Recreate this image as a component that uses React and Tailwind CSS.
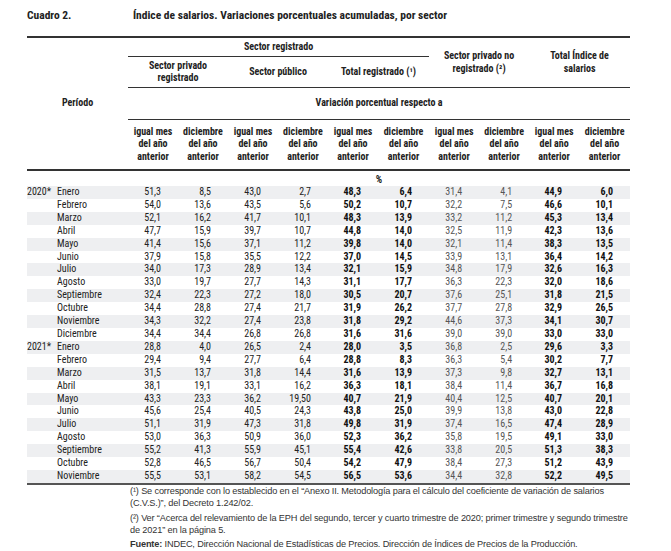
const rows2020 = [
  ["Enero", "51,3", "8,5", "43,0", "2,7", "48,3", "6,4", "31,4", "4,1", "44,9", "6,0"],
  ["Febrero", "54,0", "13,6", "43,5", "5,6", "50,2", "10,7", "32,2", "7,5", "46,6", "10,1"],
  ["Marzo", "52,1", "16,2", "41,7", "10,1", "48,3", "13,9", "33,2", "11,2", "45,3", "13,4"],
  ["Abril", "47,7", "15,9", "39,7", "10,7", "44,8", "14,0", "32,5", "11,9", "42,3", "13,6"],
  ["Mayo", "41,4", "15,6", "37,1", "11,2", "39,8", "14,0", "32,1", "11,4", "38,3", "13,5"],
  ["Junio", "37,9", "15,8", "35,5", "12,2", "37,0", "14,5", "33,9", "13,1", "36,4", "14,2"],
  ["Julio", "34,0", "17,3", "28,9", "13,4", "32,1", "15,9", "34,8", "17,9", "32,6", "16,3"],
  ["Agosto", "33,0", "19,7", "27,7", "14,3", "31,1", "17,7", "36,3", "22,3", "32,0", "18,6"],
  ["Septiembre", "32,4", "22,3", "27,2", "18,0", "30,5", "20,7", "37,6", "25,1", "31,8", "21,5"],
  ["Octubre", "34,4", "28,8", "27,4", "21,7", "31,9", "26,2", "37,7", "27,8", "32,9", "26,5"],
  ["Noviembre", "34,3", "32,2", "27,4", "23,8", "31,8", "29,2", "44,6", "37,3", "34,1", "30,7"],
  ["Diciembre", "34,4", "34,4", "26,8", "26,8", "31,6", "31,6", "39,0", "39,0", "33,0", "33,0"],
];

const rows2021 = [
  ["Enero", "28,8", "4,0", "26,5", "2,4", "28,0", "3,5", "36,8", "2,5", "29,6", "3,3"],
  ["Febrero", "29,4", "9,4", "27,7", "6,4", "28,8", "8,3", "36,3", "5,4", "30,2", "7,7"],
  ["Marzo", "31,5", "13,7", "31,8", "14,4", "31,6", "13,9", "37,3", "9,8", "32,7", "13,1"],
  ["Abril", "38,1", "19,1", "33,1", "16,2", "36,3", "18,1", "38,4", "11,4", "36,7", "16,8"],
  ["Mayo", "43,3", "23,3", "36,2", "19,50", "40,7", "21,9", "40,4", "12,5", "40,7", "20,1"],
  ["Junio", "45,6", "25,4", "40,5", "24,3", "43,8", "25,0", "39,9", "13,8", "43,0", "22,8"],
  ["Julio", "51,1", "31,9", "47,3", "31,8", "49,8", "31,9", "37,4", "16,5", "47,4", "28,9"],
  ["Agosto", "53,0", "36,3", "50,9", "36,0", "52,3", "36,2", "35,8", "19,5", "49,1", "33,0"],
  ["Septiembre", "55,2", "41,3", "55,9", "45,1", "55,4", "42,6", "33,8", "20,5", "51,3", "38,3"],
  ["Octubre", "52,8", "46,5", "56,7", "50,4", "54,2", "47,9", "38,4", "27,3", "51,2", "43,9"],
  ["Noviembre", "55,5", "53,1", "58,2", "54,5", "56,5", "53,6", "34,4", "32,8", "52,2", "49,5"],
];

const allRows = [
  ...rows2020.map((r, i) => ({ year: i === 0 ? "2020*" : "", cells: r })),
  ...rows2021.map((r, i) => ({ year: i === 0 ? "2021*" : "", cells: r })),
];

// column style: 0-3 regular, 4-5 bold, 6-7 light gray, 8-9 bold
const valueClass = [
  "font-normal text-[#222]",
  "font-normal text-[#222]",
  "font-normal text-[#222]",
  "font-normal text-[#222]",
  "font-bold text-[#111]",
  "font-bold text-[#111]",
  "font-normal text-[#555]",
  "font-normal text-[#555]",
  "font-bold text-[#111]",
  "font-bold text-[#111]",
];

const subHead = (
  <>
    igual mes
    <br />
    del año
    <br />
    anterior
  </>
);
const subHead2 = (
  <>
    diciembre
    <br />
    del año
    <br />
    anterior
  </>
);

export default function App() {
  const cond = "font-['Liberation_Sans_Narrow','Roboto_Condensed','Arial_Narrow',sans-serif]";
  const last = allRows.length - 1;
  return (
    <div className="w-[671px] h-[551px] bg-white overflow-hidden pl-[27px] pt-[8px]">
      <div className={`flex text-[11.5px] font-bold text-[#222] leading-[14px] ${cond}`}>
        <span className="w-[106px]">Cuadro 2.</span>
        <span>Índice de salarios. Variaciones porcentuales acumuladas, por sector</span>
      </div>

      <table className={`mt-[14px] w-[603px] table-fixed border-separate border-spacing-0 text-[10px] text-[#222] ${cond}`}>
        <colgroup>
          <col className="w-[101px]" />
          <col className="w-[50px]" />
          <col className="w-[50px]" />
          <col className="w-[50px]" />
          <col className="w-[50px]" />
          <col className="w-[50px]" />
          <col className="w-[51px]" />
          <col className="w-[50px]" />
          <col className="w-[50px]" />
          <col className="w-[50px]" />
          <col className="w-[51px]" />
        </colgroup>
        <thead className="font-bold leading-[12.5px]">
          <tr className="h-[21px]">
            <th rowSpan={4} className="border-t-2 border-b-2 border-[#333] font-bold align-middle">
              Período
            </th>
            <th colSpan={6} className="border-t-2 border-b border-[#333] font-bold">
              Sector registrado
            </th>
            <th colSpan={2} rowSpan={2} className="border-t-2 border-b border-[#333] font-bold px-2">
              Sector privado no
              <br />
              registrado (²)
            </th>
            <th colSpan={2} rowSpan={2} className="border-t-2 border-b border-[#333] font-bold px-2">
              Total Índice de
              <br />
              salarios
            </th>
          </tr>
          <tr className="h-[31px]">
            <th colSpan={2} className="border-b border-[#333] font-bold">
              Sector privado
              <br />
              registrado
            </th>
            <th colSpan={2} className="border-b border-[#333] font-bold">
              Sector público
            </th>
            <th colSpan={2} className="border-b border-[#333] font-bold">
              Total registrado (¹)
            </th>
          </tr>
          <tr className="h-[32px]">
            <th colSpan={10} className="border-b border-[#333] font-bold">
              Variación porcentual respecto a
            </th>
          </tr>
          <tr className="h-[51px]">
            {[0, 1, 2, 3, 4].map((i) => [
              <th key={"a" + i} className="border-b-2 border-[#333] font-bold">
                {subHead}
              </th>,
              <th key={"b" + i} className="border-b-2 border-[#333] font-bold">
                {subHead2}
              </th>,
            ])}
          </tr>
        </thead>
        <tbody className="leading-[12.9px]">
          <tr className="h-[15px]">
            <td></td>
            <td colSpan={10} className="text-center font-bold text-[10px] align-bottom leading-[12px]">
              %
            </td>
          </tr>
          {allRows.map((row, idx) => (
            <tr key={idx} className={`h-[12.9px] ${idx % 2 === 0 ? "bg-[#eeeff1]" : "bg-white"}`}>
              <td className={`p-0 ${idx === last ? "border-b-2 border-[#555]" : ""}`}>
                <div className="flex">
                  <span className="w-[30px]">{row.year}</span>
                  <span>{row.cells[0]}</span>
                </div>
              </td>
              {row.cells.slice(1).map((v, c) => (
                <td
                  key={c}
                  className={`p-0 pr-[17px] text-right ${valueClass[c]} ${
                    idx === last ? "border-b-2 border-[#555]" : ""
                  }`}
                >
                  {v}
                </td>
              ))}
            </tr>
          ))}
        </tbody>
      </table>

      <div className="ml-[103px] w-[502px] font-['Liberation_Sans',Arial,sans-serif] text-[9.2px] tracking-[-0.15px] leading-[12px] text-[#333]">
        <p>
          (¹) Se corresponde con lo establecido en el “Anexo II. Metodología para el cálculo del coeficiente de
          variación de salarios (C.V.S.)”, del Decreto 1.242/02.
        </p>
        <p className="mt-[3px]">
          (²) Ver “Acerca del relevamiento de la EPH del segundo, tercer y cuarto trimestre de 2020; primer
          trimestre y segundo trimestre de 2021” en la página 5.
        </p>
        <p className="mt-[2px]">
          <span className="font-bold">Fuente:</span> INDEC, Dirección Nacional de Estadísticas de Precios.
          Dirección de Índices de Precios de la Producción.
        </p>
      </div>
    </div>
  );
}
